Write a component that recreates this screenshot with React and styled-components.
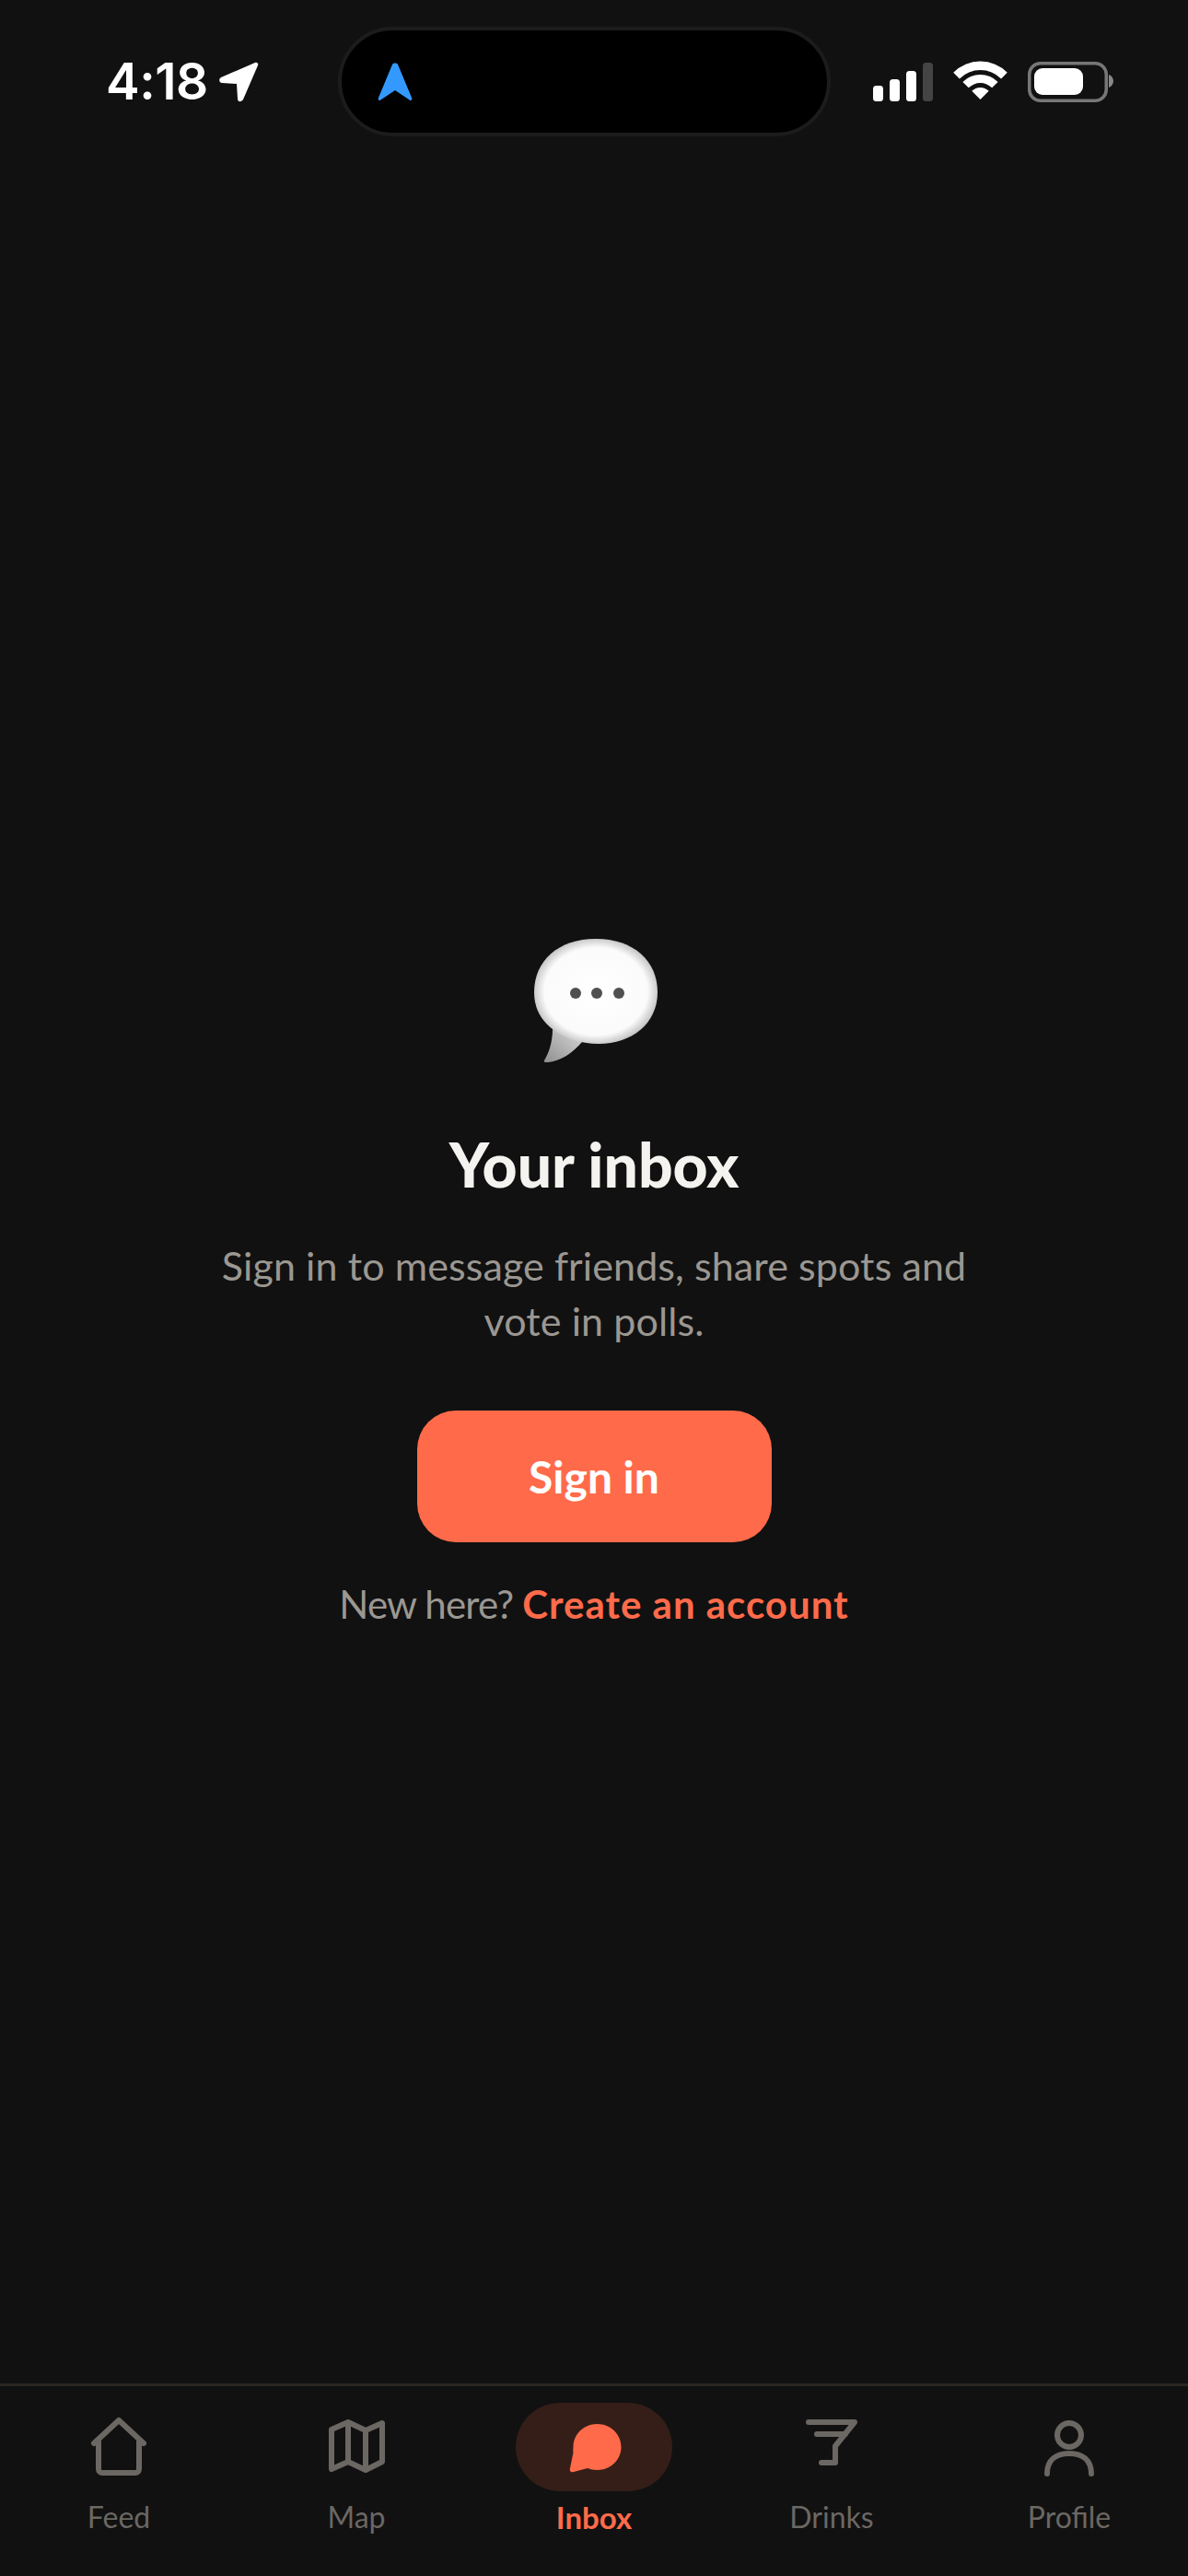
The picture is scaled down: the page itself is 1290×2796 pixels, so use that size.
import React from 'react';
import styled, { createGlobalStyle } from 'styled-components';

const Global = createGlobalStyle`
  html, body { margin: 0; padding: 0; background: #111111; }
  * { box-sizing: border-box; }
`;
const Screen = styled.div`
  width: 1290px; height: 2796px; background: #111111; display: flex; flex-direction: column;
  font-family: "Inter", "Liberation Sans", sans-serif; overflow: hidden;
`;
const StatusBar = styled.div`
  display: flex; align-items: center; height: 148px; padding: 29px 0 0 115px;
`;
const Clock = styled.div`
  display: flex; align-items: center; width: 252px; gap: 11px; color: #fff;
  font-size: 55px; font-weight: 600; letter-spacing: -0.5px; line-height: 1;
`;
const Island = styled.div`
  width: 535px; height: 119px; border: 4px solid #1c1c1c; border-radius: 60px; background: #000;
  display: flex; align-items: center; padding-left: 39px;
`;
const StatusIcons = styled.div`
  display: flex; align-items: center; margin-left: 46px;
`;
const Main = styled.main`
  flex: 1; display: flex; flex-direction: column; align-items: center; padding-top: 871px;
`;
const Emoji = styled.div`
  display: flex; margin-left: 4px;
`;
const Title = styled.h1`
  margin: 74px 0 0; font-family: "Lato", sans-serif; font-size: 66px; font-weight: 900; color: #f5f3ef; line-height: 72px;
`;
const Body = styled.p`
  margin: 44px 0 0; width: 860px; text-align: center; color: #9b9791;
  font-family: "Lato", sans-serif; font-size: 43px; letter-spacing: 0.1px; line-height: 60px;
`;
const SignIn = styled.button`
  margin-top: 67px; width: 385px; height: 143px; border: 0; border-radius: 42px; background: #ff6b4a; color: #fff;
  font-family: "Lato", sans-serif; font-size: 48px; font-weight: 700;
`;
const Footer = styled.p`
  margin: 40px 0 0; color: #9b9791; font-family: "Lato", sans-serif; font-size: 42px; letter-spacing: -0.8px; line-height: 54px;
`;
const Link = styled.a`
  color: #ff6b4a; font-weight: 700; letter-spacing: 1px;
`;
const TabBar = styled.nav`
  height: 209px; border-top: 3px solid #2a2622; display: grid; grid-template-columns: repeat(5, 1fr);
`;
const Tab = styled.div`
  display: flex; flex-direction: column; align-items: center; padding-top: 18px;
`;
const IconSlot = styled.div`
  width: 170px; height: 96px; border-radius: 48px; display: flex; align-items: center; justify-content: center;
  background: ${p => (p.$active ? '#351e18' : 'transparent')};
`;
const TabLabel = styled.span`
  margin-top: 6px; font-family: "Lato", sans-serif; line-height: 44px;
  font-size: ${p => (p.$active ? 33 : 32)}px;
  font-weight: ${p => (p.$active ? 700 : 400)};
  color: ${p => (p.$active ? '#ff6b4a' : '#6b6763')};
`;

const stroke = { fill: 'none', stroke: '#6b6763', strokeWidth: 6, strokeLinecap: 'round', strokeLinejoin: 'round' };

const tabs = [
  { label: 'Feed', icon: <svg width="66" height="66" viewBox="0 0 66 66" {...stroke}><path d="M6 29 33 4 60 29M11 27V57a4 4 0 0 0 4 4H51a4 4 0 0 0 4-4V27" /></svg> },
  { label: 'Map', icon: <svg width="66" height="66" viewBox="0 0 66 66" {...stroke}><path d="M6 14 24 6 43 15 61 7V49L43 58 24 49 6 57ZM24 6V49M43 15V58" /></svg> },
  { label: 'Inbox', active: true, icon: <svg width="60" height="60" viewBox="0 0 60 60"><path fill="#ff6b4a" d="M33.5 5C48 5 59.5 16 59.5 30S48 55 33.5 55C29.5 55 26 54 23 53L8 57C5 58 3 56 4 53L7.5 36C7 34 7.5 32 7.5 30 7.5 16 19 5 33.5 5Z" /></svg> },
  { label: 'Drinks', icon: <svg width="66" height="66" viewBox="0 0 66 66" {...stroke}><path d="M8 6H58L37 32V50M22 50H37M17 19H48" /></svg> },
  { label: 'Profile', icon: <svg width="66" height="66" viewBox="0 0 66 66" {...stroke}><circle cx="33" cy="20" r="13" /><path d="M9 62C9 47 19 40 33 40S57 47 57 62" /></svg> },
];

export default function App() {
  return (
    <Screen>
      <Global />
      <StatusBar>
        <Clock>
          4:18
          <svg width="44" height="44" viewBox="0 0 44 44"><path fill="#fff" d="M40 1 3 17C0 19 1 23 4 23L20 24 21 40C21 44 25 44 27 41L43 4C44 2 42 0 40 1Z" /></svg>
        </Clock>
        <Island>
          <svg width="38" height="42" viewBox="0 0 38 42"><path fill="#3399ff" d="M16 2C17 0 21 0 22 2L37 38C38 41 36 42 34 40L19 30 4 40C2 42 0 41 1 38Z" /></svg>
        </Island>
        <StatusIcons>
          <svg width="262" height="46" viewBox="0 0 262 46">
            <rect x="0" y="27" width="11" height="17" rx="3.5" fill="#fff" />
            <rect x="18" y="20" width="11" height="24" rx="3.5" fill="#fff" />
            <rect x="36" y="11" width="11" height="33" rx="3.5" fill="#fff" />
            <rect x="54" y="2" width="11" height="42" rx="3.5" fill="#444" />
            <path fill="#fff" d="M87.2 12.7A41.5 41.5 0 0 1 145.8 12.7L139.1 19.4A32 32 0 0 0 93.9 19.4ZM97.4 22.9A27 27 0 0 1 135.6 22.9L129.2 29.3A18 18 0 0 0 103.8 29.3ZM107.3 32.8A13 13 0 0 1 125.7 32.8L116.5 42Z" />
            <rect x="169.75" y="2.75" width="83.5" height="40.5" rx="12" fill="none" stroke="#777" strokeWidth="3.5" />
            <rect x="175" y="8" width="53" height="29" rx="9" fill="#fff" />
            <path fill="#888" d="M256 15C259 16 261 19 261 22S259 28 256 29Z" />
          </svg>
        </StatusIcons>
      </StatusBar>
      <Main>
        <Emoji>
          <svg width="134" height="135" viewBox="0 0 134 135">
            <defs>
              <radialGradient id="bubble" cx="50%" cy="50%" r="58%">
                <stop offset="0%" stopColor="#ffffff" />
                <stop offset="72%" stopColor="#fbfbfb" />
                <stop offset="100%" stopColor="#9c9c9c" />
              </radialGradient>
              <linearGradient id="tail" x1="0" y1="1" x2="1" y2="0">
                <stop offset="0%" stopColor="#8f8f8f" />
                <stop offset="100%" stopColor="#d8d8d8" />
              </linearGradient>
            </defs>
            <path fill="url(#tail)" d="M20 98C20 112 16 124 11 132 10 134 12 134 15 134 28 133 42 124 52 112Z" />
            <path fill="url(#bubble)" d="M67 0C108 0 134 24 134 58S106 114 70 114C60 114 50 112 42 110 22 102 0 88 0 58 0 24 26 0 67 0Z" />
            <circle cx="45" cy="59" r="6" fill="#505050" />
            <circle cx="68" cy="59" r="6" fill="#505050" />
            <circle cx="92" cy="59" r="6" fill="#505050" />
          </svg>
        </Emoji>
        <Title>Your inbox</Title>
        <Body>Sign in to message friends, share spots and vote in polls.</Body>
        <SignIn>Sign in</SignIn>
        <Footer>New here? <Link>Create an account</Link></Footer>
      </Main>
      <TabBar>
        {tabs.map(t => (
          <Tab key={t.label}>
            <IconSlot $active={t.active}>{t.icon}</IconSlot>
            <TabLabel $active={t.active}>{t.label}</TabLabel>
          </Tab>
        ))}
      </TabBar>
    </Screen>
  );
}
